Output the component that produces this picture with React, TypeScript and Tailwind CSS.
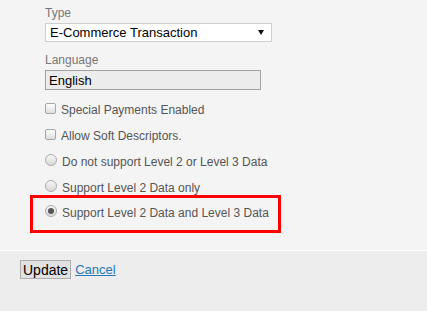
import React from 'react';

const Checkbox: React.FC = () => (
  <span className="mt-[0px] h-[11px] w-[11px] shrink-0 rounded-[2px] border border-[#a6a6a6] bg-gradient-to-b from-[#fdfdfd] to-[#dedede]" />
);

const Radio: React.FC<{ checked?: boolean }> = ({ checked }) => (
  <span className="-mt-[1px] flex h-[12px] w-[12px] shrink-0 items-center justify-center rounded-full border border-[#ababab] bg-gradient-to-b from-[#f8f8f8] to-[#d8d8d8]">
    {checked && <span className="h-[6px] w-[6px] rounded-full bg-[#555]" />}
  </span>
);

const OptionRow: React.FC<{ control: React.ReactNode; label: string; className?: string }> = ({ control, label, className }) => (
  <div className={`flex items-start gap-[5px] ${className ?? ''}`}>
    {control}
    <span className="text-[12px] leading-[14px] text-[#555]">{label}</span>
  </div>
);

export default function App() {
  return (
    <div className="min-h-[311px] w-[427px] bg-[#ededed] font-['Liberation_Sans',Arial,sans-serif]">
      {/* Settings panel */}
      <div className="h-[251px] border-b border-white bg-[#f4f4f4] pl-[45px] pt-[6px]">
        <div className="text-[12px] leading-[14px] text-[#777]">Type</div>
        <div className="mt-[3px] flex h-[19px] w-[227px] items-center justify-between border border-[#cfcfcf] bg-white pl-[4px] pr-[7px]">
          <span className="text-[13px] leading-[15px] text-black">E-Commerce Transaction</span>
          <svg width="6" height="5" viewBox="0 0 6 5">
            <path d="M0 0h6L3 5z" fill="#111" />
          </svg>
        </div>

        <div className="mt-[11px] text-[12px] leading-[14px] text-[#777]">Language</div>
        <div className="mt-[3px] flex h-[20px] w-[216px] items-center border border-[#a3a3a3] bg-[#ececec] pl-[3px]">
          <span className="text-[13px] leading-[15px] text-black">English</span>
        </div>

        <OptionRow className="mt-[13px]" control={<Checkbox />} label="Special Payments Enabled" />
        <OptionRow className="mt-[12px]" control={<Checkbox />} label="Allow Soft Descriptors." />
        <OptionRow className="mt-[12px]" control={<Radio />} label="Do not support Level 2 or Level 3 Data" />
        <OptionRow className="mt-[12px]" control={<Radio />} label="Support Level 2 Data only" />

        {/* Highlighted option */}
        <div className="-ml-[15px] mt-[0px] w-[251px] border-[3px] border-[#ff0000] pb-[10px] pl-[12px] pt-[8px]">
          <OptionRow control={<Radio checked />} label="Support Level 2 Data and Level 3 Data" />
        </div>
      </div>

      {/* Actions */}
      <div className="flex items-center pl-[20px] pt-[9px]">
        <button className="h-[19px] border border-[#adadad] bg-[#e1e1e1] px-[2px] text-[14px] leading-[16px] text-black">
          Update
        </button>
        <a href="#" className="ml-[4px] text-[13px] leading-[15px] text-[#2478b8] underline">
          Cancel
        </a>
      </div>
    </div>
  );
}
